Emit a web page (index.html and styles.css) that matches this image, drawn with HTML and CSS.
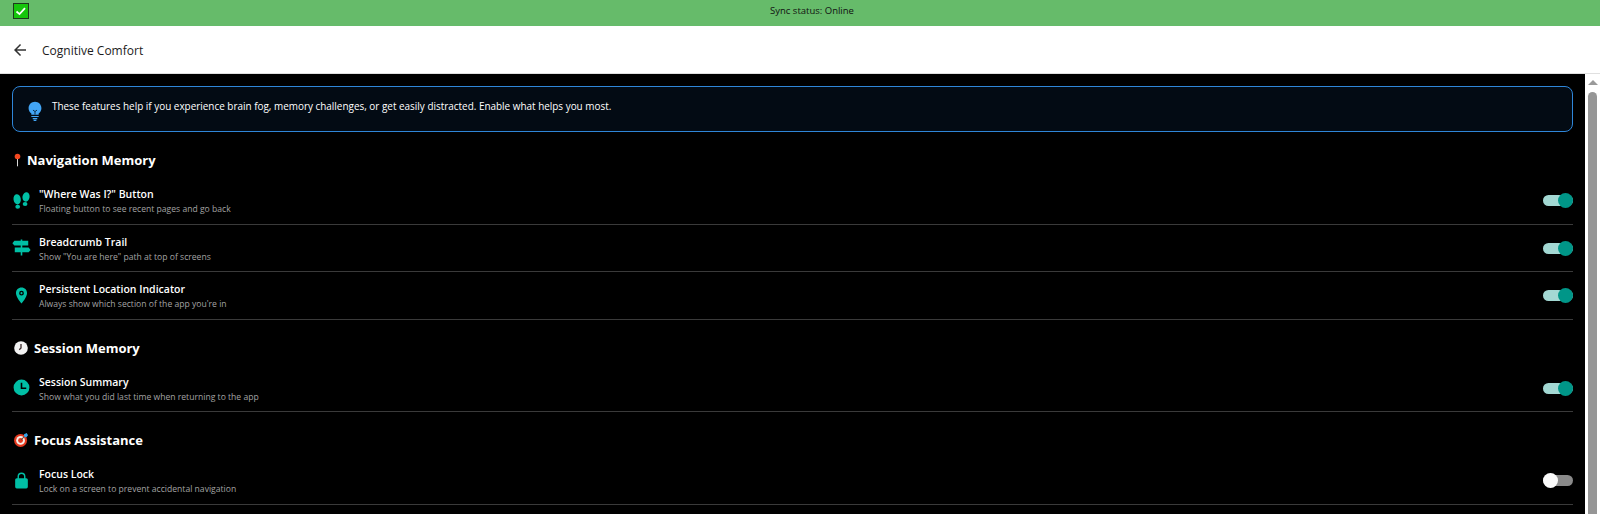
FILE: index.html
```html
<!DOCTYPE html>
<html lang="en">
<head>
<meta charset="utf-8">
<title>Cognitive Comfort</title>
<link rel="stylesheet" href="styles.css">
</head>
<body>
<div class="sync">
  <svg class="sync-icon" viewBox="0 0 16 16"><rect x="0.5" y="0.5" width="15" height="15" fill="#16c60c" stroke="#1c3a1c"/><path d="M3.5 8.5l3 2.6 5.500-6" fill="none" stroke="#fff" stroke-width="1.800"/></svg>
  <span class="sync-text">Sync status: Online</span>
</div>
<header class="appbar">
  <svg class="back" viewBox="0 0 24 24"><path d="M20 11H7.830l5.590-5.590L12 4l-8 8 8 8 1.410-1.410L7.830 13H20z"/></svg>
  <span class="appbar-title">Cognitive Comfort</span>
</header>
<div class="viewport">
  <main class="content">
    <div class="banner">
      <svg class="banner-icon" viewBox="0 0 24 24"><path d="M12 2C8.100 2 5 5.100 5 9c0 2.400 1.200 4.500 3 5.700V16h8v-1.300c1.800-1.200 3-3.300 3-5.700 0-3.900-3.100-7-7-7z"/><path d="M8 18h8M9.500 20.300h5M10.500 22.300h3" stroke="#42a5f5" stroke-width="1.300" fill="none"/><path d="M9.800 11l2.200 1.600 2.200-1.600M12 12.600V16" stroke="#0a2238" stroke-width="1" fill="none"/></svg>
      <span>These features help if you experience brain fog, memory challenges, or get easily distracted. Enable what helps you most.</span>
    </div>

    <h2 class="section">
      <svg class="emoji pin" viewBox="0 0 10 18"><path d="M5 7v11" stroke="#d9d9d9" stroke-width="1.500"/><circle cx="5" cy="4" r="4" fill="#f4471f"/></svg>
      Navigation Memory
    </h2>
    <div class="row">
      <svg class="row-icon" viewBox="0 0 24 24"><ellipse cx="6.500" cy="10.500" rx="4.600" ry="6.500" transform="rotate(-8 6.500 10.500)"/><ellipse cx="7.200" cy="20" rx="3" ry="2.500"/><ellipse cx="17.700" cy="7.500" rx="4.500" ry="6" transform="rotate(10 17.700 7.500)"/><ellipse cx="16.500" cy="16.500" rx="3" ry="2.500"/></svg>
      <div class="row-text"><div class="row-title">"Where Was I?" Button</div><div class="row-sub">Floating button to see recent pages and go back</div></div>
      <div class="toggle on"><span class="knob"></span></div>
    </div>
    <div class="row">
      <svg class="row-icon" viewBox="0 0 24 24"><path d="M11 2h2v1.500h7.500v6H13V12h8l2.500 3-2.500 3h-8v4h-2v-4H3.500v-6H11V9.500H3L.5 6.500 3 3.500h8z"/></svg>
      <div class="row-text"><div class="row-title">Breadcrumb Trail</div><div class="row-sub">Show "You are here" path at top of screens</div></div>
      <div class="toggle on"><span class="knob"></span></div>
    </div>
    <div class="row">
      <svg class="row-icon" viewBox="0 0 24 24"><path fill-rule="evenodd" d="M12 2C8 2 5 5.100 5 9c0 5.200 7 13 7 13s7-7.800 7-13c0-3.900-3-7-7-7zm0 4a3 3 0 1 1 0 6 3 3 0 0 1 0-6zm0 1.700a1.300 1.300 0 1 0 0 2.600 1.300 1.300 0 0 0 0-2.600z"/></svg>
      <div class="row-text"><div class="row-title">Persistent Location Indicator</div><div class="row-sub">Always show which section of the app you're in</div></div>
      <div class="toggle on"><span class="knob"></span></div>
    </div>

    <h2 class="section">
      <svg class="emoji" viewBox="0 0 16 16"><circle cx="8" cy="8" r="7.800" fill="#f2f2f2"/><path d="M8 3.500V8L6 10" fill="none" stroke="#3a2a2a" stroke-width="1.500"/></svg>
      Session Memory
    </h2>
    <div class="row">
      <svg class="row-icon" viewBox="0 0 24 24"><path fill-rule="evenodd" d="M12 2a10 10 0 1 0 0 20 10 10 0 0 0 0-20zM11 6h2v6h5v2h-7z"/></svg>
      <div class="row-text"><div class="row-title">Session Summary</div><div class="row-sub">Show what you did last time when returning to the app</div></div>
      <div class="toggle on"><span class="knob"></span></div>
    </div>

    <h2 class="section">
      <svg class="emoji" viewBox="0 0 16 16"><circle cx="7.500" cy="8.500" r="7.400" fill="#e5391f"/><circle cx="7.500" cy="8.500" r="5" fill="#f5f0ea"/><circle cx="7.500" cy="8.500" r="2.800" fill="#e5391f"/><path d="M8 8l5.500-5.500" stroke="#5b4a48" stroke-width="1.200"/><path d="M11.500 1.500l3-1.500 1.500 2.500-2 2.500-2.500-1z" fill="#35a4e8"/></svg>
      Focus Assistance
    </h2>
    <div class="row">
      <svg class="row-icon" viewBox="0 0 24 24"><path fill-rule="evenodd" d="M18 9h-1V7a5 5 0 0 0-10 0v2H6a2 2 0 0 0-2 2v9a2 2 0 0 0 2 2h12a2 2 0 0 0 2-2v-9a2 2 0 0 0-2-2zM8.800 9V7a3.200 3.200 0 0 1 6.400 0v2z"/></svg>
      <div class="row-text"><div class="row-title">Focus Lock</div><div class="row-sub">Lock on a screen to prevent accidental navigation</div></div>
      <div class="toggle"><span class="knob"></span></div>
    </div>
  </main>
  <div class="scrollbar">
    <span class="scroll-up"></span>
    <span class="scroll-thumb"></span>
  </div>
</div>
</body>
</html>
```
FILE: styles.css
```css
* { box-sizing: border-box; }
html, body { height: 100%; }
body {
  margin: 0;
  height: 514px;
  overflow: hidden;
  display: flex;
  flex-direction: column;
  background: #000;
  font-family: "Open Sans", "Noto Sans", sans-serif;
  color: #fff;
}
.sync {
  height: 26px;
  flex: none;
  background: #66bb6a;
  display: flex;
  align-items: flex-start;
  padding: 3px 0 0 13px;
}
.sync-icon { width: 16px; height: 16px; flex: none; }
.sync-text { flex: 1; text-align: center; font-size: 9.500px; line-height: 14px; color: #111; margin: 1px 0 0 -5px; }
.appbar {
  height: 48px;
  flex: none;
  background: #fff;
  border-bottom: 1px solid #e0e0e0;
  display: flex;
  align-items: center;
  padding-left: 11px;
  color: #1c1c1c;
}
.back { width: 18px; height: 18px; fill: #333; margin-right: 13px; }
.appbar-title { font-size: 12px; line-height: 16px; margin-top: 2px; }
.viewport { flex: 1; display: flex; min-height: 0; }
.content { flex: 1; min-width: 0; padding: 12px 12px 0 12px; overflow: hidden; }
.banner {
  height: 46px;
  border: 1px solid #2f86d8;
  border-radius: 8px;
  background: #030b14;
  display: flex;
  align-items: center;
  padding: 0 0 6px 11px;
  font-size: 9.930px;
}
.banner-icon { width: 22px; height: 22px; fill: #42a5f5; margin: 10px 6px 0 0; flex: none; }
.section {
  display: flex;
  align-items: center;
  gap: 6px;
  height: 22px;
  margin: 17px 0 6px;
  font-size: 13px;
  font-weight: 700;
}
.emoji { width: 14px; height: 14px; flex: none; margin-left: 2px; }
.pin { width: 7px; height: 14px; }
.row {
  height: 47.500px;
  display: flex;
  align-items: center;
  border-bottom: 1px solid #3a3a3a;
  padding-top: 3px;
}
.row-icon { width: 19px; height: 19px; fill: #00bfa5; flex: none; margin: 0 8px 3px 0; }
.row-text { flex: 1; min-width: 0; }
.row-title { font-size: 10.500px; line-height: 14px; font-weight: 600; }
.row-sub { font-size: 8.600px; line-height: 13px; color: #a3a3a3; margin-top: 2px; }
.toggle {
  position: relative;
  width: 30px;
  height: 11px;
  border-radius: 6px;
  background: #8a8a8a;
  flex: none;
  margin-bottom: 2px;
}
.toggle .knob {
  position: absolute;
  top: -2px;
  left: 0;
  width: 15px;
  height: 15px;
  border-radius: 50%;
  background: #fafafa;
}
.toggle.on { background: #a3d8d3; }
.toggle.on .knob { left: 15px; background: #009688; }
.scrollbar {
  width: 15px;
  flex: none;
  background: #fff;
  display: flex;
  flex-direction: column;
  align-items: center;
}
.scroll-up {
  width: 0;
  height: 0;
  margin-top: 6px;
  border-left: 5px solid transparent;
  border-right: 5px solid transparent;
  border-bottom: 5px solid #9a9a9a;
}
.scroll-thumb {
  width: 9px;
  flex: 1;
  margin-top: 7px;
  background: #969696;
  border-radius: 5px 5px 0 0;
}
```
